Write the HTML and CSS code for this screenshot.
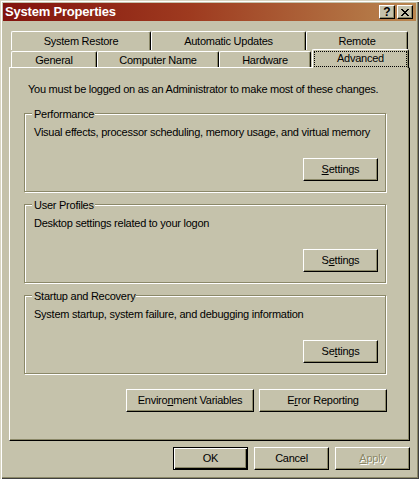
FILE: index.html
```html
<!DOCTYPE html>
<html>
<head>
<meta charset="utf-8">
<title>System Properties</title>
<link rel="stylesheet" href="styles.css">
</head>
<body>
<div class="window">
  <div class="titlebar">
    <span class="title">System Properties</span>
    <div class="caption-btns">
      <span class="cap-btn help">?</span>
      <span class="cap-btn close">
        <svg width="8" height="7" viewBox="0 0 8 7" shape-rendering="crispEdges">
          <rect x="0" y="0" width="2" height="1"/><rect x="6" y="0" width="2" height="1"/>
          <rect x="1" y="1" width="2" height="1"/><rect x="5" y="1" width="2" height="1"/>
          <rect x="2" y="2" width="4" height="1"/>
          <rect x="3" y="3" width="2" height="1"/>
          <rect x="2" y="4" width="4" height="1"/>
          <rect x="1" y="5" width="2" height="1"/><rect x="5" y="5" width="2" height="1"/>
          <rect x="0" y="6" width="2" height="1"/><rect x="6" y="6" width="2" height="1"/>
        </svg>
      </span>
    </div>
  </div>
  <div class="content">
    <div class="tabs">
      <div class="tab-row row-back">
        <div class="tab t-restore">System Restore</div>
        <div class="tab t-updates">Automatic Updates</div>
        <div class="tab t-remote">Remote</div>
      </div>
      <div class="tab-row row-front">
        <div class="tab t-general">General</div>
        <div class="tab t-name">Computer Name</div>
        <div class="tab t-hardware">Hardware</div>
        <div class="tab t-advanced selected"><span class="focus">Advanced</span></div>
      </div>
    </div>
    <div class="panel">
      <p class="intro">You must be logged on as an Administrator to make most of these changes.</p>
      <div class="group">
        <div class="group-label">Performance</div>
        <div class="group-desc">Visual effects, processor scheduling, memory usage, and virtual memory</div>
        <button class="btn settings"><u>S</u>ettings</button>
      </div>
      <div class="group">
        <div class="group-label">User Profiles</div>
        <div class="group-desc">Desktop settings related to your logon</div>
        <button class="btn settings">S<u>e</u>ttings</button>
      </div>
      <div class="group">
        <div class="group-label">Startup and Recovery</div>
        <div class="group-desc">System startup, system failure, and debugging information</div>
        <button class="btn settings">Se<u>t</u>tings</button>
      </div>
      <div class="panel-actions">
        <button class="btn wide">Enviro<u>n</u>ment Variables</button>
        <button class="btn wide">E<u>r</u>ror Reporting</button>
      </div>
    </div>
    <div class="dialog-actions">
      <button class="btn default">OK</button>
      <button class="btn">Cancel</button>
      <button class="btn disabled"><u>A</u>pply</button>
    </div>
  </div>
</div>
</body>
</html>
```
FILE: styles.css
```css
html, body {
  margin: 0;
  padding: 0;
  background: #c5c2ab;
}
body {
  font-family: "Liberation Sans", Arial, sans-serif;
  font-size: 11px;
  letter-spacing: -0.25px;
  color: #000;
}
.window {
  width: 419px;
  height: 479px;
  box-sizing: border-box;
  padding: 3px;
  background: #c5c2ab;
  box-shadow: inset 1px 1px 0 #d8d5c2, inset 2px 2px 0 #fff, inset -1px -1px 0 #404040, inset -2px -2px 0 #8b8868;
  display: flex;
  flex-direction: column;
}
.titlebar {
  height: 18px;
  display: flex;
  align-items: center;
  padding: 0 3px 0 2px;
  background: linear-gradient(90deg, #82130d 0%, #9e3a1f 45%, #b9864f 100%);
}
.title {
  flex: 1;
  color: #fff;
  font-weight: bold;
  font-size: 13px;
  letter-spacing: -0.2px;
  line-height: 18px;
}
.caption-btns {
  display: flex;
  gap: 2px;
}
.cap-btn {
  width: 16px;
  height: 14px;
  box-sizing: border-box;
  display: flex;
  align-items: center;
  justify-content: center;
  background: #c5c2ab;
  border: 1px solid;
  border-color: #fff #000 #000 #fff;
  box-shadow: inset -1px -1px 0 #8b8868;
  font-weight: bold;
  font-size: 12px;
  line-height: 12px;
  letter-spacing: 0;
}
.cap-btn svg {
  display: block;
  fill: #000;
}
.content {
  flex: 1;
  padding: 10px 6px 0 6px;
  display: flex;
  flex-direction: column;
}
.tab-row {
  display: flex;
  padding-left: 2px;
}
.tab {
  box-sizing: border-box;
  text-align: center;
  background: #c5c2ab;
  border-left: 1px solid #fff;
  border-top: 1px solid #fff;
  border-right: 1px solid #000;
  border-radius: 2px 2px 0 0;
  box-shadow: inset -1px 0 0 #8b8868;
  line-height: 13px;
  white-space: nowrap;
}
.row-back {
  height: 19px;
}
.row-back .tab {
  height: 19px;
  padding-top: 3px;
}
.row-front {
  height: 18px;
  margin-top: -1px;
  align-items: flex-end;
}
.row-front .tab {
  height: 16px;
  padding-top: 2px;
}
.t-restore { width: 140px; }
.t-updates { width: 155px; }
.t-remote { width: 102px; }
.t-general { width: 86px; }
.t-name { width: 122px; }
.t-hardware { width: 92px; }
.row-front .tab.selected {
  width: 97px;
  height: 19px;
  margin-left: 1px;
  margin-bottom: -1px;
  padding: 1px 1px 1px 1px;
  position: relative;
  z-index: 1;
}
.focus {
  display: block;
  height: 16px;
  box-sizing: border-box;
  border: 1px dotted #000;
  line-height: 13px;
}
.panel {
  height: 374px;
  box-sizing: border-box;
  border: 1px solid;
  border-color: #fff #000 #000 #fff;
  box-shadow: inset -1px -1px 0 #8b8868;
  padding: 0 23px 0 14px;
  display: flex;
  flex-direction: column;
}
.intro {
  margin: 15px 0 17px 4px;
  line-height: 13px;
  white-space: nowrap;
}
.group {
  height: 79px;
  box-sizing: border-box;
  border: 1px solid #8b8868;
  box-shadow: inset 1px 1px 0 #fff, 1px 1px 0 #fff;
  padding: 0 7px 10px 9px;
  margin-bottom: 12px;
  display: flex;
  flex-direction: column;
}
.group-label {
  align-self: flex-start;
  margin: -6px 0 0 -2px;
  padding: 0 1px 0 2px;
  background: #c5c2ab;
  line-height: 13px;
}
.group-desc {
  margin-top: 5px;
  line-height: 13px;
  white-space: nowrap;
}
.btn {
  box-sizing: border-box;
  width: 75px;
  height: 23px;
  padding: 0;
  margin: 0;
  font: inherit;
  letter-spacing: -0.25px;
  color: #000;
  background: #c5c2ab;
  border: 1px solid;
  border-color: #fff #000 #000 #fff;
  box-shadow: inset -1px -1px 0 #8b8868;
  border-radius: 0;
  text-align: center;
  line-height: 13px;
}
.settings {
  margin-top: auto;
  align-self: flex-end;
}
.panel-actions {
  display: flex;
  justify-content: flex-end;
  gap: 5px;
  margin: 3px -1px 0 0;
}
.wide {
  width: 128px;
}
.dialog-actions {
  display: flex;
  justify-content: flex-end;
  gap: 6px;
  margin-top: 6px;
}
.default {
  border: 1px solid #000;
  box-shadow: inset 1px 1px 0 #fff, inset -1px -1px 0 #000, inset -2px -2px 0 #8b8868;
}
.disabled {
  color: #8b8868;
  text-shadow: 1px 1px 0 #fff;
}
```
